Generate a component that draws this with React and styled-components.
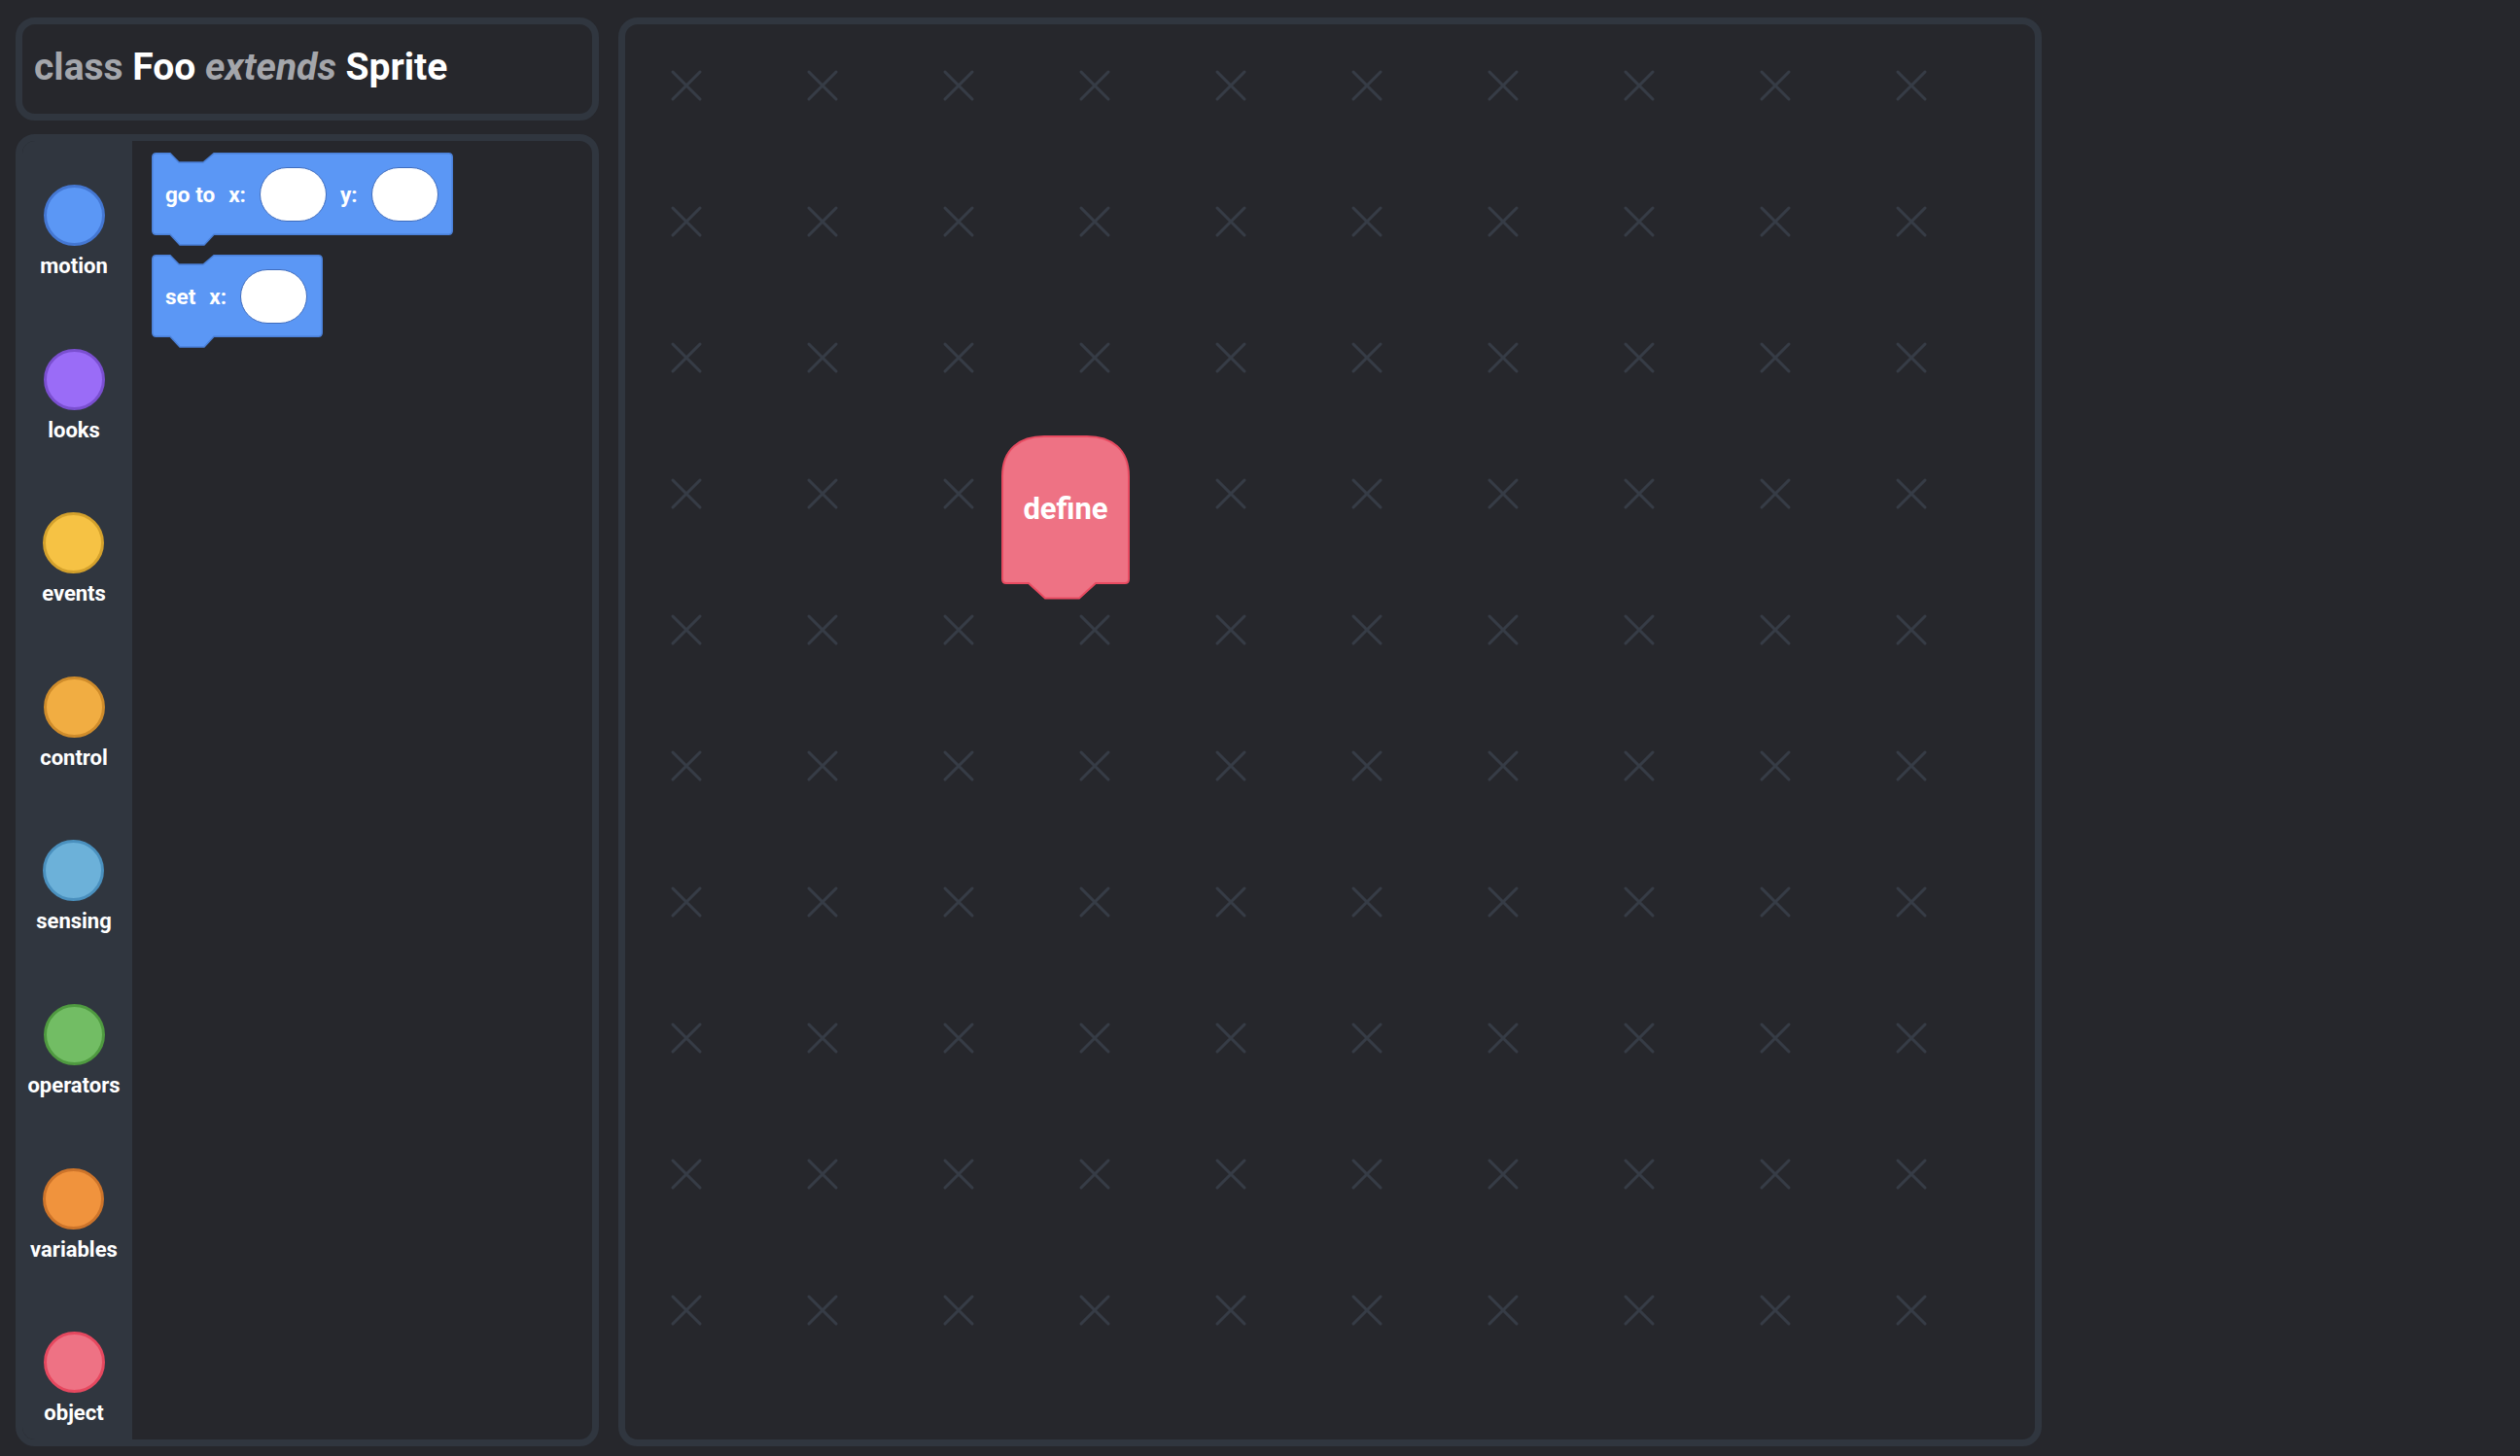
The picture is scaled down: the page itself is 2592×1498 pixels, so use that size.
import React from "react";
import styled, { createGlobalStyle } from "styled-components";

const categories = [
	{ name: "motion", fill: "#5b97f5", edge: "#4477d2" },
	{ name: "looks", fill: "#9a6cf7", edge: "#7a4fd0" },
	{ name: "events", fill: "#f6c244", edge: "#d4a12c" },
	{ name: "control", fill: "#f1ad42", edge: "#cf8c2b" },
	{ name: "sensing", fill: "#6cb1d9", edge: "#4a90be" },
	{ name: "operators", fill: "#72bd64", edge: "#4f9a40" },
	{ name: "variables", fill: "#f0933d", edge: "#cd742a" },
	{ name: "object", fill: "#ee7284", edge: "#e6485f" },
];

// stack block outline, notch on top and tab below
function stackPath(w, h) {
	return `M0.75,4.75 Q0.75,0.75 4.75,0.75 H19 L28,10 H53 L64,0.75 H${w - 4.75} Q${w - 0.75},0.75 ${w - 0.75},4.75 V${h - 4.75} Q${w - 0.75},${h - 0.75} ${w - 4.75},${h - 0.75} H64 L54,${h + 10} H29 L19,${h - 0.75} H4.75 Q0.75,${h - 0.75} 0.75,${h - 4.75} Z`;
}

function hatPath(w, h) {
	return `M1,${h - 5} V42 C1,14 19,1 44,1 H${w - 44} C${w - 19},1 ${w - 1},14 ${w - 1},42 V${h - 5} Q${w - 1},${h - 1} ${w - 5},${h - 1} H97 L80,${h + 14.5} H45 L28,${h - 1} H5 Q1,${h - 1} 1,${h - 5} Z`;
}

function StackBlock({ width, children }) {
	return (
		<Block $width={width}>
			<BlockShape width={width} height={98}>
				<path d={stackPath(width, 85)} fill="#5b97f5" stroke="#4a7fd6" strokeWidth="1.5" />
			</BlockShape>
			{children}
		</Block>
	);
}

export default function App() {
	return (
		<>
			<GlobalStyle />
			<Page>
				<LeftColumn>
					<Header>
						<Title>
							<Keyword>class</Keyword> Foo <Keyword $italic>extends</Keyword> Sprite
						</Title>
					</Header>
					<Palette>
						<CategoryList>
							{categories.map((c) => (
								<Category key={c.name}>
									<Dot $fill={c.fill} $edge={c.edge} />
									<CategoryLabel>{c.name}</CategoryLabel>
								</Category>
							))}
						</CategoryList>
						<Flyout>
							<StackBlock width={310}>
								<BlockText>go to</BlockText>
								<BlockText>x:</BlockText>
								<Slot />
								<BlockText>y:</BlockText>
								<Slot />
							</StackBlock>
							<StackBlock width={176}>
								<BlockText>set</BlockText>
								<BlockText>x:</BlockText>
								<Slot />
							</StackBlock>
						</Flyout>
					</Palette>
				</LeftColumn>
				<Workspace>
					<GridSvg>
						<defs>
							<pattern id="marks" width="140" height="140" patternUnits="userSpaceOnUse">
								<path d="M49,49 L77,77 M77,49 L49,77" stroke="#363c46" strokeWidth="3" strokeLinecap="round" />
							</pattern>
						</defs>
						<rect width="1400" height="1400" fill="url(#marks)" />
					</GridSvg>
					<DefineBlock>
						<BlockShape width={132} height={172}>
							<path d={hatPath(132, 153)} fill="#ee7284" stroke="#e84b61" strokeWidth="2" />
						</BlockShape>
						<DefineText>define</DefineText>
					</DefineBlock>
				</Workspace>
			</Page>
		</>
	);
}

const GlobalStyle = createGlobalStyle`
	html, body {
		margin: 0;
		background: #26272c;
	}
	body {
		font-family: Roboto, "Liberation Sans", sans-serif;
	}
`;

const Page = styled.div`
	display: flex;
	gap: 20px;
	height: 1498px;
	padding: 18px 0 10px 16px;
	box-sizing: border-box;
	overflow: hidden;
`;

const LeftColumn = styled.div`
	width: 600px;
	display: flex;
	flex-direction: column;
	gap: 14px;
`;

const Header = styled.div`
	height: 106px;
	box-sizing: border-box;
	border: 7px solid #30363f;
	border-radius: 20px;
	display: flex;
	align-items: center;
	padding: 0 12px 4px;
`;

const Title = styled.h1`
	margin: 0;
	font-size: 39px;
	font-weight: 700;
	color: #ffffff;
	white-space: nowrap;
`;

const Keyword = styled.span`
	color: #a4a6ab;
	font-style: ${(p) => (p.$italic ? "italic" : "normal")};
`;

const Palette = styled.div`
	flex: 1;
	min-height: 0;
	border: 7px solid #30363f;
	border-radius: 20px;
	display: flex;
	overflow: hidden;
`;

const CategoryList = styled.div`
	width: 113px;
	background: #30363f;
	display: flex;
	flex-direction: column;
	align-items: center;
	padding: 45px 7px 0 0;
	box-sizing: border-box;
	overflow: hidden;
`;

const Category = styled.div`
	flex: none;
	height: 168.6px;
	display: flex;
	flex-direction: column;
	align-items: center;
`;

const Dot = styled.div`
	width: 63px;
	height: 63px;
	box-sizing: border-box;
	border-radius: 50%;
	background: ${(p) => p.$fill};
	border: 3px solid ${(p) => p.$edge};
`;

const CategoryLabel = styled.div`
	margin-top: 8px;
	font-size: 22px;
	font-weight: 700;
	color: #ffffff;
`;

const Flyout = styled.div`
	flex: 1;
	display: flex;
	flex-direction: column;
	align-items: flex-start;
	gap: 20px;
	padding: 12px 0 0 20px;
`;

const Block = styled.div`
	position: relative;
	width: ${(p) => p.$width}px;
	height: 85px;
	box-sizing: border-box;
	display: flex;
	align-items: center;
	gap: 14px;
	padding-left: 14px;
`;

const BlockShape = styled.svg`
	position: absolute;
	left: 0;
	top: 0;
	overflow: visible;
`;

const BlockText = styled.span`
	position: relative;
	font-size: 22.5px;
	font-weight: 700;
	color: #ffffff;
	white-space: nowrap;
`;

const Slot = styled.span`
	position: relative;
	width: 69px;
	height: 56px;
	box-sizing: border-box;
	border-radius: 28px;
	background: #ffffff;
	border: 1.5px solid #3f6cbd;
`;

const Workspace = styled.div`
	position: relative;
	width: 1464px;
	height: 1470px;
	box-sizing: border-box;
	border: 7px solid #30363f;
	border-radius: 20px;
	overflow: hidden;
`;

const GridSvg = styled.svg`
	display: block;
	width: 100%;
	height: 100%;
`;

const DefineBlock = styled.div`
	position: absolute;
	left: 387px;
	top: 423px;
	width: 132px;
	height: 153px;
	display: flex;
	align-items: center;
	justify-content: center;
	padding-bottom: 2px;
	box-sizing: border-box;
`;

const DefineText = styled.span`
	position: relative;
	font-size: 31px;
	font-weight: 700;
	color: #ffffff;
`;
